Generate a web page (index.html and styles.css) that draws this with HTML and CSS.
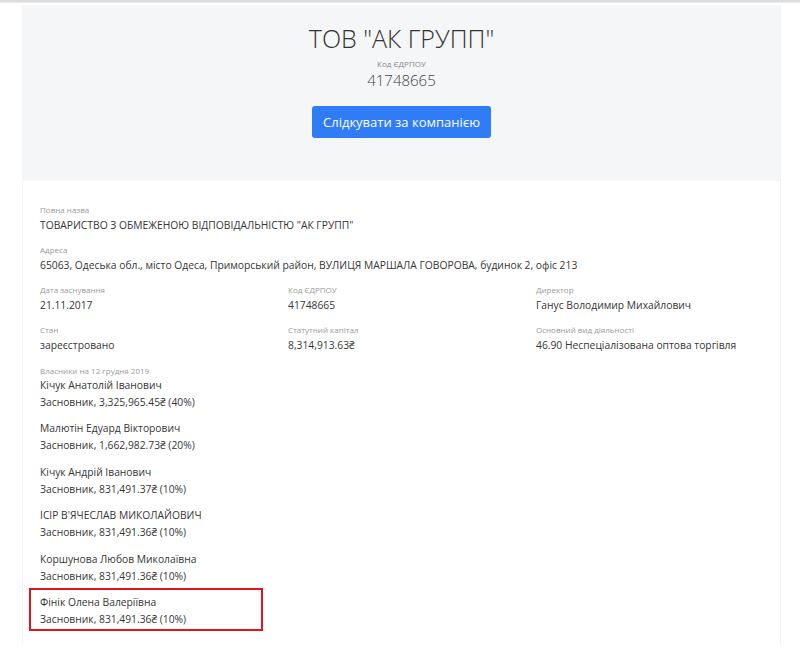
FILE: index.html
```html
<!DOCTYPE html>
<html lang="uk">
<head>
	<meta charset="UTF-8">
	<title>ТОВ "АК ГРУПП"</title>
	<link rel="stylesheet" href="styles.css">
</head>
<body>
	<div class="topbar"></div>
	<div class="wrap">
		<div class="hero">
			<h1 class="hero-title">ТОВ "АК ГРУПП"</h1>
			<div class="hero-label">Код ЄДРПОУ</div>
			<div class="hero-code">41748665</div>
			<a href="#" class="btn">Слідкувати за компанією</a>
		</div>

		<div class="card">
			<div class="field">
				<div class="label">Повна назва</div>
				<div class="value">ТОВАРИСТВО З ОБМЕЖЕНОЮ ВІДПОВІДАЛЬНІСТЮ "АК ГРУПП"</div>
			</div>
			<div class="field">
				<div class="label">Адреса</div>
				<div class="value">65063, Одеська обл., місто Одеса, Приморський район, ВУЛИЦЯ МАРШАЛА ГОВОРОВА, будинок 2, офіс 213</div>
			</div>

			<div class="grid">
				<div class="field">
					<div class="label">Дата заснування</div>
					<div class="value">21.11.2017</div>
				</div>
				<div class="field">
					<div class="label">Код ЄДРПОУ</div>
					<div class="value">41748665</div>
				</div>
				<div class="field">
					<div class="label">Директор</div>
					<div class="value">Ганус Володимир Михайлович</div>
				</div>
				<div class="field">
					<div class="label">Стан</div>
					<div class="value">зареєстровано</div>
				</div>
				<div class="field">
					<div class="label">Статутний капітал</div>
					<div class="value">8,314,913.63₴</div>
				</div>
				<div class="field">
					<div class="label">Основний вид діяльності</div>
					<div class="value">46.90 Неспеціалізована оптова торгівля</div>
				</div>
			</div>

			<div class="label owners-label">Власники на 12 грудня 2019</div>
			<ul class="owners">
				<li class="owner">
					<div>Кічук Анатолій Іванович</div>
					<div>Засновник, 3,325,965.45₴ (40%)</div>
				</li>
				<li class="owner">
					<div>Малютін Едуард Вікторович</div>
					<div>Засновник, 1,662,982.73₴ (20%)</div>
				</li>
				<li class="owner">
					<div>Кічук Андрій Іванович</div>
					<div>Засновник, 831,491.37₴ (10%)</div>
				</li>
				<li class="owner">
					<div>ІСІР В'ЯЧЕСЛАВ МИКОЛАЙОВИЧ</div>
					<div>Засновник, 831,491.36₴ (10%)</div>
				</li>
				<li class="owner">
					<div>Коршунова Любов Миколаївна</div>
					<div>Засновник, 831,491.36₴ (10%)</div>
				</li>
				<li class="owner marked">
					<div>Фінік Олена Валеріївна</div>
					<div>Засновник, 831,491.36₴ (10%)</div>
				</li>
			</ul>
		</div>
	</div>
</body>
</html>
```

FILE: styles.css
```css
body,h1,ul,li{margin:0;padding:0}
body{font:10.3px/17px "Open Sans", "Noto Sans", "DejaVu Sans", sans-serif;color:#363636;background:#fff;}
ul{list-style:none}
a{text-decoration:none}

.topbar{
    height:2px;
    background:#dcdcdc;
    border-bottom:1px solid #ececec;
}
.wrap{
    width:757px;
    margin:2px 0 0 22px;
    border-left:1px solid #f6f6f6;
    border-right:1px solid #f2f2f2;
    height:640px;
    overflow:hidden;
}
.hero{
    background:#f5f6f7;
    height:176px;
    padding-top:16px;
    box-sizing:border-box;
    text-align:center;
}
.hero-title{
    font-size:25px;
    line-height:34px;
    font-weight:300;
    color:#333;
}
.hero-label{
    font-size:8px;
    line-height:12px;
    color:#888;
    margin-top:3px;
}
.hero-code{
    font-size:15px;
    line-height:20px;
    font-weight:300;
    color:#444;
}
.btn{
    display:inline-block;
    margin-top:16px;
    width:179px;
    height:32px;
    line-height:32px;
    background:#2f7cf6;
    color:#fff;
    font-size:13px;
    border-radius:3px;
}

.card{
    padding:22px 17px 40px;
}
.field{
    margin-bottom:9px;
}
.label{
    font-size:8px;
    line-height:14px;
    color:#999;
}
.grid{
    display:grid;
    grid-template-columns:248px 248px 1fr;
}
.owners-label{
    line-height:12px;
    margin-top:2px;
}
.owner{
    margin-bottom:9.4px;
}
.marked{
    position:relative;
}
.marked:after{
    content:"";
    position:absolute;
    left:-11px;
    top:-6px;
    width:230px;
    height:39px;
    border:2px solid #e4141e;
}
```
